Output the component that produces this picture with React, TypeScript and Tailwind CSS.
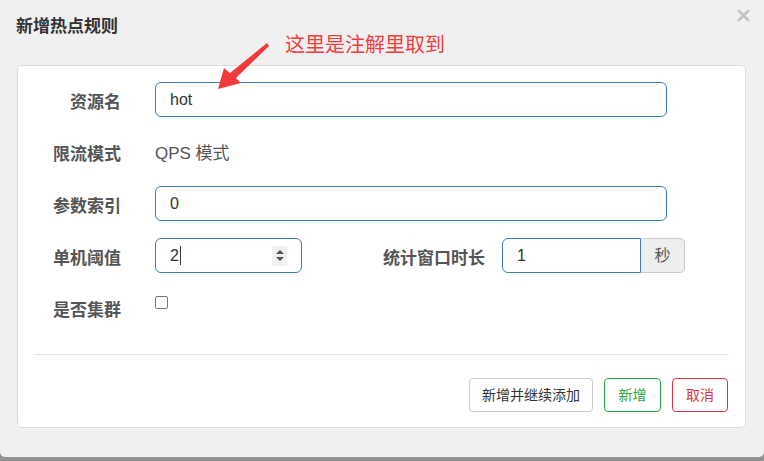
import React from 'react';

const font = { fontFamily: '"Liberation Sans", "Noto Sans CJK SC", sans-serif' };

const Label: React.FC<{ text: string; className?: string }> = ({ text, className }) => (
  <div className={`shrink-0 pt-[8px] text-right text-[17px] leading-[26px] font-bold text-[#555] ${className ?? 'w-[103px]'}`}>
    {text}
  </div>
);

const inputCls =
  'h-[35px] rounded-[6px] border border-[#3b7cbd] bg-white pl-[14px] text-[16px] leading-[33px] text-[#333] flex items-center';

const App: React.FC = () => {
  return (
    <div className="w-[764px] h-[461px] bg-[#939393] overflow-hidden" style={font}>
      <div className="relative h-[457px] bg-[#f0f0f0] rounded-b-[5px] flex flex-col">
        {/* Header */}
        <div className="flex items-start justify-between h-[65px]">
          <h4 className="pl-[16px] pt-[15px] text-[17px] leading-[24px] font-bold text-[#333]">新增热点规则</h4>
          <button className="mr-[14px] mt-[9px] p-0">
            <svg width="13" height="13" viewBox="0 0 13 13">
              <path d="M2 2 L11 11 M11 2 L2 11" stroke="#c2c2c2" strokeWidth="2.6" strokeLinecap="square" />
            </svg>
          </button>
        </div>

        {/* Annotation overlay */}
        <div className="absolute left-[285px] top-[32px] text-[20px] leading-[26px] text-[#f23d3d]">这里是注解里取到</div>
        <svg className="absolute left-0 top-0 z-10" width="300" height="100" viewBox="0 0 300 100">
          <polygon points="218,89 224,68 230,73 267,43 269,46 236,78 241,83" fill="#f33a3a" />
        </svg>

        {/* Card */}
        <div className="ml-[17px] mr-[18px] h-[363px] bg-white border border-[#dcdcdc] rounded-[5px] pt-[16px]">
          <div className="flex flex-col gap-[17px]">
            <div className="flex h-[35px]">
              <Label text="资源名" />
              <div className={`${inputCls} ml-[34px] w-[512px]`}>hot</div>
            </div>
            <div className="flex h-[35px]">
              <Label text="限流模式" />
              <div className="ml-[34px] pt-[7px] text-[17px] leading-[26px] text-[#555]">QPS 模式</div>
            </div>
            <div className="flex h-[35px]">
              <Label text="参数索引" />
              <div className={`${inputCls} ml-[34px] w-[512px]`}>0</div>
            </div>
            <div className="flex h-[35px]">
              <Label text="单机阈值" />
              <div className={`${inputCls} ml-[34px] w-[147px] justify-between pr-[14px]`}>
                <span className="flex items-center">
                  2<span className="ml-[1px] inline-block w-[1px] h-[19px] bg-[#333]" />
                </span>
                <span className="flex flex-col items-center justify-center gap-[3px] w-[15px] h-[20px] bg-[#f0f0f0]">
                  <span className="w-0 h-0 border-l-[4px] border-r-[4px] border-b-[4px] border-l-transparent border-r-transparent border-b-[#505050]" />
                  <span className="w-0 h-0 border-l-[4px] border-r-[4px] border-t-[4px] border-l-transparent border-r-transparent border-t-[#505050]" />
                </span>
              </div>
              <Label text="统计窗口时长" className="w-[183px]" />
              <div className="ml-[17px] flex">
                <div className={`${inputCls} w-[139px] rounded-r-none`}>1</div>
                <div className="h-[35px] w-[44px] flex items-center justify-center bg-[#eeeeee] border border-l-0 border-[#cccccc] rounded-r-[5px] text-[16px] text-[#555]">
                  秒
                </div>
              </div>
            </div>
            <div className="flex h-[35px]">
              <Label text="是否集群" />
              <div className="ml-[34px] pt-[6px]">
                <span className="block w-[13px] h-[13px] border border-[#767676] rounded-[2px] bg-white" />
              </div>
            </div>
          </div>

          <div className="mx-[16px] mt-[29px] border-t border-[#e5e5e5]" />

          <div className="flex justify-end gap-[11px] pr-[17px] pt-[23px]">
            <button className="h-[34px] w-[124px] rounded-[4px] border border-[#cccccc] bg-white text-[14px] text-[#333]">
              新增并继续添加
            </button>
            <button className="h-[34px] w-[57px] rounded-[4px] border border-[#28a745] bg-white text-[14px] text-[#28a745]">
              新增
            </button>
            <button className="h-[34px] w-[56px] rounded-[4px] border border-[#dc3545] bg-white text-[14px] text-[#dc3545]">
              取消
            </button>
          </div>
        </div>
      </div>
    </div>
  );
};

export default App;
